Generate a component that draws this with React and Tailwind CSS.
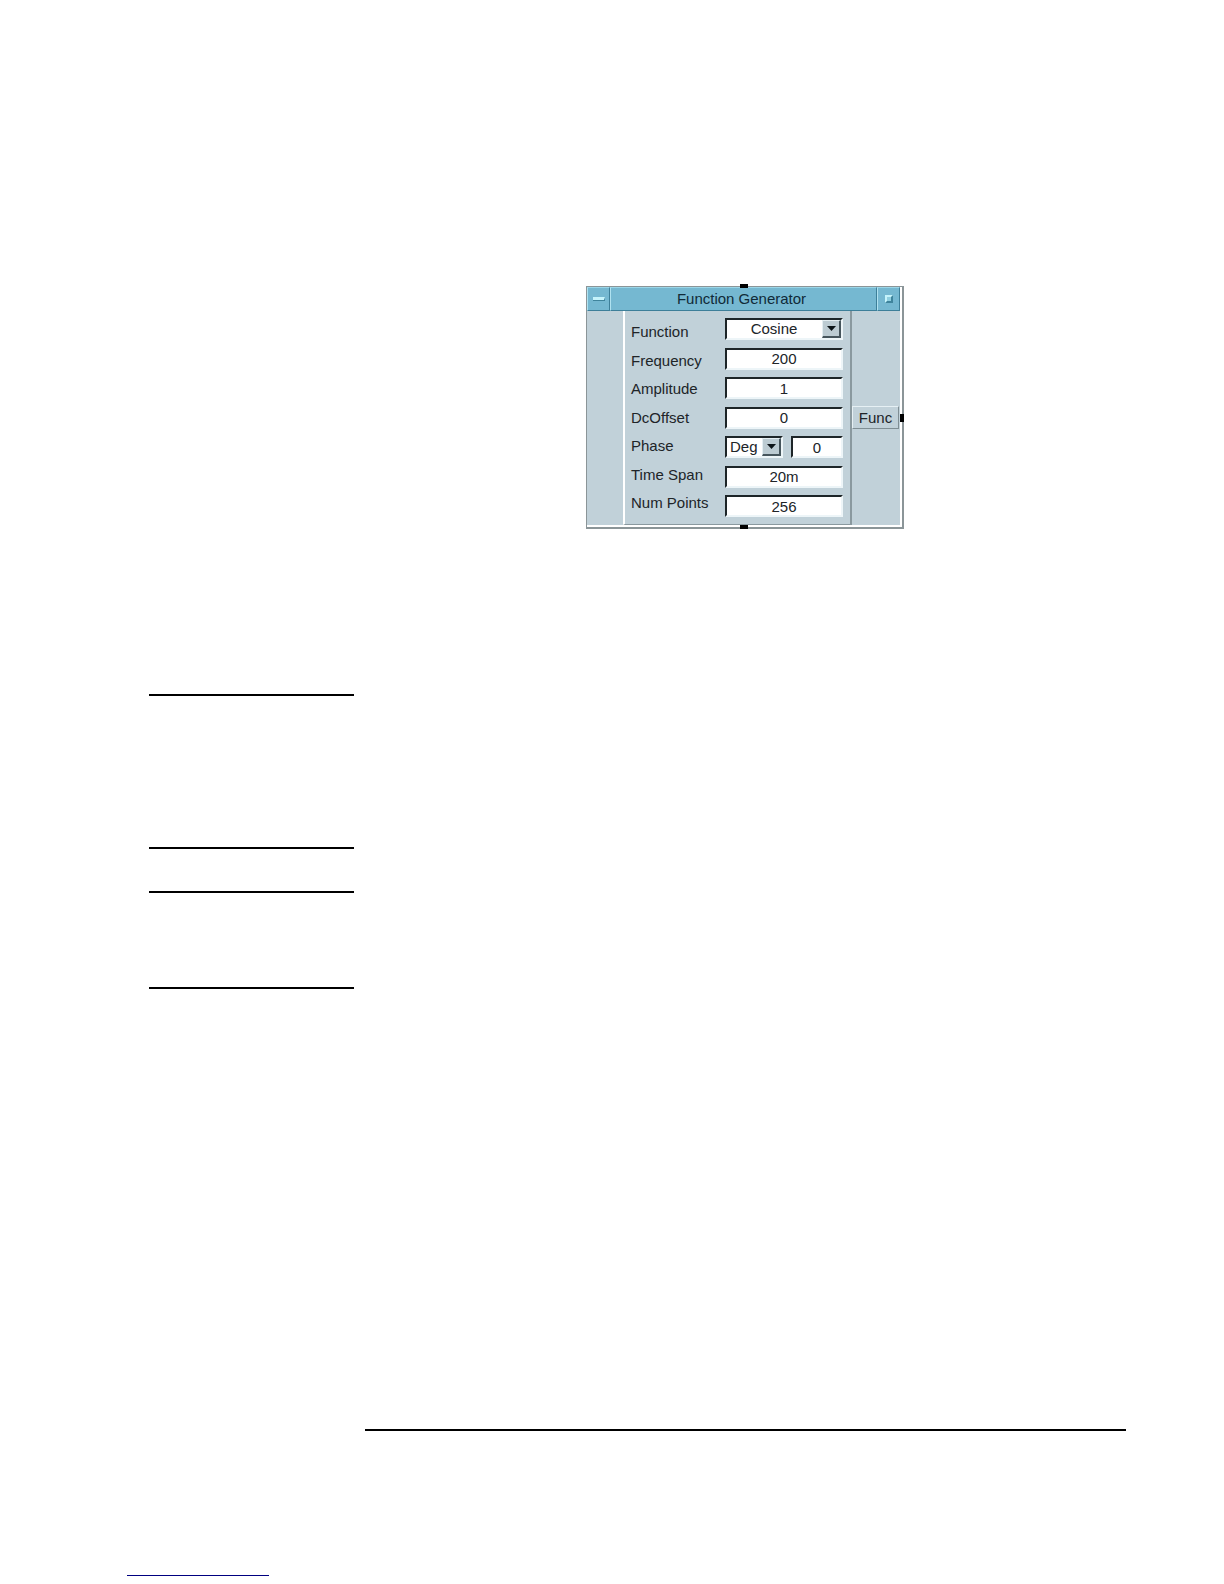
const valueText = "font-['Liberation_Sans',Arial,sans-serif] text-[15px] leading-4 text-[#202428]";
const sunken =
  'border-2 border-t-[#1d2528] border-l-[#1d2528] border-r-[#edf5f8] border-b-[#edf5f8] bg-white';

const fields = [
  { id: 'function', label: 'Function', value: 'Cosine', options: ['Cosine', 'Sine', 'Square', 'Triangle'] },
  { id: 'frequency', label: 'Frequency', value: '200' },
  { id: 'amplitude', label: 'Amplitude', value: '1' },
  { id: 'dcoffset', label: 'DcOffset', value: '0' },
  { id: 'phase', label: 'Phase', value: '0', unit: 'Deg' },
  { id: 'timespan', label: 'Time Span', value: '20m' },
  { id: 'numpoints', label: 'Num Points', value: '256' },
];

function TextField({ id, value }) {
  return (
    <input
      id={id}
      type="text"
      defaultValue={value}
      className={`block h-[22px] w-full min-w-0 p-0 text-center outline-none ${sunken} ${valueText}`}
    />
  );
}

function SelectField({ id, label, options, align }) {
  return (
    <div className={`relative h-[22px] w-full ${sunken}`}>
      <select
        id={id}
        aria-label={label}
        className={`block h-full w-full appearance-none pr-5 outline-none ${align} ${valueText}`}
      >
        {options.map((option) => (
          <option key={option}>{option}</option>
        ))}
      </select>
      {/* Arrow button */}
      <span className="pointer-events-none absolute top-0 right-0 flex h-[18px] w-[19px] items-center justify-center border border-r-2 border-b-2 border-t-[#e4eef2] border-l-[#e4eef2] border-r-[#46555c] border-b-[#46555c] bg-[#bccbd2]">
        <svg className="h-[5px] w-[9px]" viewBox="0 0 9 5" fill="#0c1418">
          <path d="M0 0h9L4.500 5z" />
        </svg>
      </span>
    </div>
  );
}

function FieldControl({ field }) {
  if (field.options) {
    return <SelectField id={field.id} label={field.label} options={field.options} align="text-center" />;
  }
  if (field.unit) {
    return (
      <div className="flex gap-2">
        <div className="w-[58px] shrink-0">
          <SelectField id="phase-unit" label="Phase unit" options={[field.unit, 'Rad', 'Grad']} align="pl-[3px] text-left" />
        </div>
        <TextField id={field.id} value={field.value} />
      </div>
    );
  }
  return <TextField id={field.id} value={field.value} />;
}

function TitleBar() {
  const bevel =
    'flex items-center justify-center border border-t-[#9bd6e8] border-l-[#b0e2f0] border-r-[#3d7f99] border-b-[#3d7f99] bg-[#75b8d1]';

  return (
    <header className="flex h-6">
      <button type="button" aria-label="Menu" className={`w-[23px] ${bevel}`}>
        <svg className="h-1 w-3" viewBox="0 0 12 4">
          <path d="M0 0h12v4H0z" fill="#3f849c" />
          <path d="M0 0h12l-1 3H0z" fill="#c5f3fb" />
        </svg>
      </button>
      <h1 className={`flex-1 pr-1 ${bevel} font-['Liberation_Sans',Arial,sans-serif] text-[15px] leading-4 text-[#102a38]`}>
        Function Generator
      </h1>
      <button type="button" aria-label="Minimize" className={`w-[23px] ${bevel}`}>
        <svg className="h-2 w-2" viewBox="0 0 8 8">
          <path d="M0 0h8v8H0z" fill="#3f849c" />
          <path d="M0 0h8L6 2v4H2L0 8z" fill="#c5f3fb" />
          <path d="M2 2h4v4H2z" fill="#8fcfe0" />
        </svg>
      </button>
    </header>
  );
}

function FunctionGenerator() {
  return (
    <section className="relative w-[318px] border border-r-2 border-b-2 border-[#8b9598] bg-[#c1d1d9]">
      <div className="border-r-2 border-white">
        <TitleBar />
        <div className="flex h-[216px] border-b-2 border-white">
          <div className="w-9 shrink-0" />
          <div className="flex flex-1 border-r-2 border-b border-l-2 border-r-[#8a999f] border-b-[#8a999f] border-l-white pl-[6px] pr-[7px]">
            {/* Labels */}
            <div className="mt-[13px] mb-[13px] flex w-[94px] shrink-0 flex-col justify-between">
              {fields.map((field) => (
                <label key={field.id} htmlFor={field.id} className={`whitespace-nowrap ${valueText}`}>
                  {field.label}
                </label>
              ))}
            </div>
            {/* Values */}
            <div className="mt-[7px] mb-[7px] flex min-w-0 flex-1 flex-col justify-between">
              {fields.map((field) => (
                <FieldControl key={field.id} field={field} />
              ))}
            </div>
          </div>
          {/* Output terminal */}
          <div className="flex w-12 shrink-0 flex-col pt-[95px] pr-px">
            <button
              type="button"
              className={`h-[23px] w-full border border-t-[#e6f0f4] border-l-[#e6f0f4] border-r-[#7f8e94] border-b-[#7f8e94] ${valueText}`}
            >
              Func
            </button>
          </div>
        </div>
      </div>

      {/* Pins */}
      <span className="absolute -top-[3px] left-[153px] h-1 w-2 bg-black" />
      <span className="absolute -bottom-[2px] left-[153px] h-1 w-2 bg-black" />
      <span className="absolute top-[127px] -right-[2px] h-2 w-1 bg-black" />
    </section>
  );
}

export default function App() {
  return (
    <main className="flex min-h-screen flex-col bg-white">
      <div className="mt-[286px] ml-[586px]">
        <FunctionGenerator />
      </div>

      {/* Margin rules */}
      <div className="mt-[165px] ml-[149px] w-[205px]">
        <hr className="border-t-2 border-black" />
        <hr className="mt-[151px] border-t-2 border-black" />
        <hr className="mt-[42px] border-t-2 border-black" />
        <hr className="mt-[94px] border-t-2 border-black" />
      </div>

      {/* Page footer */}
      <footer className="mt-auto pb-2">
        <hr className="mr-[98px] ml-[365px] border-t-2 border-black" />
        <hr className="mt-36 ml-[127px] w-[142px] border-t border-[#000080]" />
      </footer>
    </main>
  );
}
